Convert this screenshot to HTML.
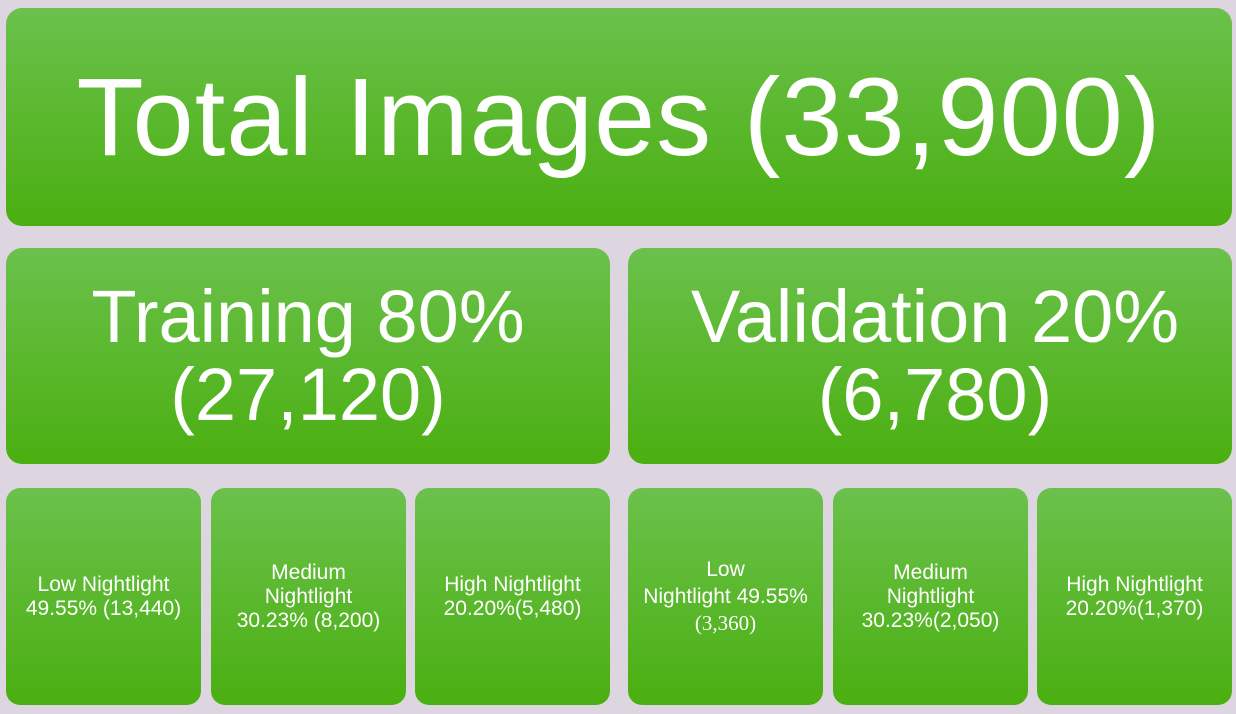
<!DOCTYPE html>
<html><head><style>
body{margin:0;width:1236px;height:714px;background:#ddd6e0;position:relative;overflow:hidden;font-family:"Liberation Sans",sans-serif;color:#fff}
.b{position:absolute;border-radius:16px;background:linear-gradient(#6bc14c,#4aaf10);display:flex;align-items:center;justify-content:center;text-align:center}
.t{font-size:110px;letter-spacing:1px}
.m{font-size:74px;line-height:78px}
.s{font-size:21px;line-height:24px;border-radius:14px}
</style></head><body>
<div class="b t" style="left:6px;top:8px;width:1226px;height:218px">Total Images (33,900)</div>
<div class="b m" style="left:6px;top:248px;width:604px;height:216px"><div>Training 80%<br>(27,120)</div></div>
<div class="b m" style="left:628px;top:248px;width:604px;height:216px"><div style="margin-left:10px">Validation 20%<br>(6,780)</div></div>
<div class="b s" style="left:6px;top:488px;width:195px;height:217px"><div>Low Nightlight<br>49.55% (13,440)</div></div>
<div class="b s" style="left:211px;top:488px;width:195px;height:217px"><div>Medium<br>Nightlight<br>30.23% (8,200)</div></div>
<div class="b s" style="left:415px;top:488px;width:195px;height:217px"><div>High Nightlight<br>20.20%(5,480)</div></div>
<div class="b s" style="left:628px;top:488px;width:195px;height:217px"><div style="line-height:27px">Low<br>Nightlight 49.55%<br><span style="font-family:'Liberation Serif',serif">(3,360)</span></div></div>
<div class="b s" style="left:833px;top:488px;width:195px;height:217px"><div>Medium<br>Nightlight<br>30.23%(2,050)</div></div>
<div class="b s" style="left:1037px;top:488px;width:195px;height:217px"><div>High Nightlight<br>20.20%(1,370)</div></div>
</body></html>
